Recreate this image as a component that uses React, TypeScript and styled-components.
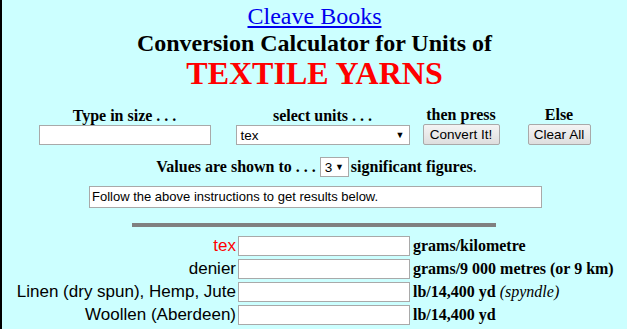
import React from 'react';
import styled, { createGlobalStyle } from 'styled-components';

const GlobalStyle = createGlobalStyle`
  html, body {
    margin: 0;
    padding: 0;
    background: #ccffff;
  }
  body {
    font-family: "Liberation Serif", "Times New Roman", serif;
  }
`;

const Page = styled.div`
  border-left: 2px solid #000;
  min-height: 329px;
  box-sizing: border-box;
  padding-top: 3px;
  display: flex;
  flex-direction: column;
  align-items: center;
`;

const SiteLink = styled.a`
  color: #0000ee;
  font-size: 24px;
  line-height: 27px;
  text-decoration: underline;
`;

const Title = styled.h1`
  margin: 1px 0 0;
  font-size: 24px;
  line-height: 24px;
  font-weight: bold;
  color: #000;
`;

const Subject = styled.h2`
  margin: 0;
  font-size: 32px;
  line-height: 36px;
  font-weight: bold;
  color: #ff0000;
`;

const FormRow = styled.div`
  margin-top: 15px;
  display: flex;
  align-items: flex-end;
`;

const Column = styled.div<{ $gap: number }>`
  display: flex;
  flex-direction: column;
  align-items: center;
  margin-left: ${p => p.$gap}px;
`;

const ColHead = styled.div`
  font-size: 16px;
  font-weight: bold;
  line-height: 18px;
  height: 18px;
  white-space: nowrap;
`;

const TextBox = styled.input<{ $w: number }>`
  box-sizing: border-box;
  width: ${p => p.$w}px;
  height: 20px;
  margin: 0;
  border: 1px solid #a9a9a9;
  background: #fff;
  font-family: "Liberation Sans", Arial, sans-serif;
  font-size: 13px;
  padding: 1px 2px;
`;

const SelectBox = styled.div<{ $w: number }>`
  box-sizing: border-box;
  width: ${p => p.$w}px;
  height: 20px;
  border: 1px solid #a9a9a9;
  background: #fff;
  font-family: "Liberation Sans", Arial, sans-serif;
  font-weight: normal;
  font-size: 13.5px;
  color: #000;
  display: flex;
  align-items: center;
  justify-content: space-between;
  padding: 0 4px 0 4px;
`;

const Arrow = styled.span`
  font-size: 9px;
  line-height: 1;
`;

const Button = styled.button<{ $w: number }>`
  box-sizing: border-box;
  width: ${p => p.$w}px;
  height: 21px;
  margin: 0;
  padding: 0;
  border: 1px solid #a9a9a9;
  border-radius: 2px;
  background: linear-gradient(#f4f4f4, #dedede);
  font-family: "Liberation Sans", Arial, sans-serif;
  font-size: 13.5px;
  color: #000;
`;

const FiguresLine = styled.div`
  margin-top: 12px;
  font-size: 16px;
  font-weight: bold;
  display: flex;
  align-items: center;
  margin-left: 4px;
  > div {
    margin: 0 2px 0 4px;
  }
`;

const Period = styled.span`
  font-weight: normal;
`;

const Message = styled.div`
  margin-top: 9px;
  box-sizing: border-box;
  width: 453px;
  height: 22px;
  border: 1px solid #a9a9a9;
  background: #fff;
  font-family: "Liberation Sans", Arial, sans-serif;
  font-size: 13px;
  line-height: 20px;
  padding: 0 2px;
  color: #000;
  margin-left: 2px;
`;

const Rule = styled.hr`
  margin: 15px 0 0 -2px;
  width: 364px;
  height: 4px;
  border: none;
  background: #808080;
`;

const Results = styled.div`
  margin-top: 9px;
  align-self: stretch;
  display: grid;
  grid-template-columns: 236px 172px auto;
  row-gap: 3px;
  align-items: center;
`;

const UnitName = styled.div<{ $red?: boolean }>`
  text-align: right;
  font-family: "Liberation Sans", Arial, sans-serif;
  font-size: 17px;
  line-height: 20px;
  color: ${p => (p.$red ? '#ff0000' : '#000')};
  padding-right: 2px;
  white-space: nowrap;
`;

const UnitDesc = styled.div`
  font-size: 16px;
  font-weight: bold;
  line-height: 20px;
  padding-left: 3px;
  white-space: nowrap;
  > i {
    font-weight: normal;
  }
`;

const rows = [
  { name: 'tex', desc: <>grams/kilometre</>, red: true },
  { name: 'denier', desc: <>grams/9 000 metres (or 9 km)</> },
  { name: 'Linen (dry spun), Hemp, Jute', desc: <>lb/14,400 yd <i>(spyndle)</i></> },
  { name: 'Woollen (Aberdeen)', desc: <>lb/14,400 yd</> },
];

export default function App() {
  return (
    <Page>
      <GlobalStyle />
      <SiteLink href="#">Cleave Books</SiteLink>
      <Title>Conversion Calculator for Units of</Title>
      <Subject>TEXTILE YARNS</Subject>

      <FormRow>
        <Column $gap={0}>
          <ColHead>Type in size . . .</ColHead>
          <TextBox $w={172} />
        </Column>
        <Column $gap={25}>
          <ColHead>select units . . .</ColHead>
          <SelectBox $w={174}>
            <span>tex</span>
            <Arrow>▼</Arrow>
          </SelectBox>
        </Column>
        <Column $gap={13}>
          <ColHead>then press</ColHead>
          <Button $w={77}>Convert It!</Button>
        </Column>
        <Column $gap={28}>
          <ColHead>Else</ColHead>
          <Button $w={63}>Clear All</Button>
        </Column>
      </FormRow>

      <FiguresLine>
        Values are shown to . . .
        <SelectBox $w={29}>
          <span>3</span>
          <Arrow>▼</Arrow>
        </SelectBox>
        <span>significant figures<Period>.</Period></span>
      </FiguresLine>

      <Message>Follow the above instructions to get results below.</Message>

      <Rule />

      <Results>
        {rows.map(r => (
          <React.Fragment key={r.name}>
            <UnitName $red={r.red}>{r.name}</UnitName>
            <TextBox $w={172} />
            <UnitDesc>{r.desc}</UnitDesc>
          </React.Fragment>
        ))}
      </Results>
    </Page>
  );
}
